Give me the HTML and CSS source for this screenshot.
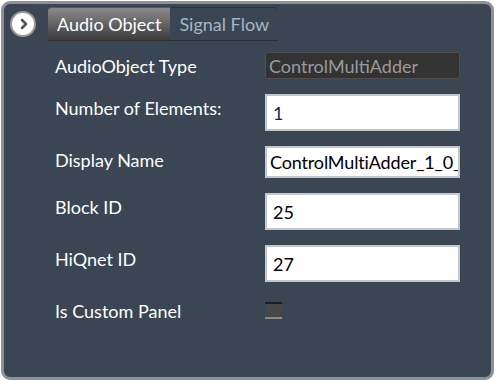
FILE: index.html
```html
<!DOCTYPE html>
<html>
<head>
<meta charset="utf-8">
<link rel="stylesheet" href="styles.css">
</head>
<body>
<div class="frame">
  <div class="header">
    <div class="circle-btn">
      <svg width="12" height="12" viewBox="0 0 12 12"><path d="M4 2 L8 6 L4 10" fill="none" stroke="#555" stroke-width="2.6" stroke-linecap="round" stroke-linejoin="round"/></svg>
    </div>
    <div class="tabs">
      <div class="tab active">Audio Object</div>
      <div class="tab">Signal Flow</div>
    </div>
  </div>
  <div class="form">
    <div class="label">AudioObject Type</div>
    <div class="field disabled">ControlMultiAdder</div>

    <div class="label">Number of Elements:</div>
    <div class="field tall navy">1</div>

    <div class="label">Display Name</div>
    <div class="field mid">ControlMultiAdder_1_0_</div>

    <div class="label">Block ID</div>
    <div class="field tall">25</div>

    <div class="label">HiQnet ID</div>
    <div class="field tall">27</div>

    <div class="label">Is Custom Panel</div>
    <div class="check-cell"><div class="checkbox"></div></div>
  </div>
</div>
</body>
</html>
```
FILE: styles.css
```css
html, body {
  margin: 0;
  padding: 0;
  background: #ffffff;
}
body {
  width: 496px;
  height: 381px;
  font-family: Lato, "Open Sans", sans-serif;
}
.frame {
  margin: 1px 0 0 1px;
  width: 487px;
  height: 373px;
  border: 3px solid #8e9195;
  border-radius: 9px;
  background: #3a4653;
}
.header {
  display: flex;
  align-items: center;
  padding: 3px 0 0 6px;
  gap: 12px;
}
.circle-btn {
  width: 22px;
  height: 22px;
  border-radius: 50%;
  background: #ffffff;
  border: 2px solid #9a9a9a;
  display: flex;
  align-items: center;
  justify-content: center;
}
.circle-btn svg {
  margin-left: 1px;
}
.tabs {
  display: flex;
}
.tab {
  height: 32px;
  line-height: 32px;
  font-size: 18px;
  padding: 0 9px;
  color: #a7b5c3;
  border-top: 1px solid #2a3037;
  border-bottom: 1px solid #2a3037;
  border-top-right-radius: 4px;
}
.tab.active {
  color: #ffffff;
  background: linear-gradient(#8a8a8a, #3c3c3c);
  border-top: 1px solid #5a5a5a;
  border-bottom: 1px solid #333333;
  border-radius: 4px 0 0 0;
}
.form {
  display: grid;
  grid-template-columns: 210px 195px;
  row-gap: 15px;
  padding: 11px 0 0 51px;
}
.label {
  color: #ffffff;
  font-size: 18px;
  line-height: 24px;
  padding-top: 2px;
  white-space: nowrap;
}
.field {
  box-sizing: border-box;
  background: #ffffff;
  border: 2px solid #c3c7cc;
  color: #000000;
  font-size: 18px;
  padding: 0 0 0 6px;
  white-space: nowrap;
  overflow: hidden;
  display: flex;
  align-items: center;
}
.field.disabled {
  height: 27px;
  background: #333333;
  border: 1px solid #505050;
  border-radius: 2px;
  color: #9a9a9a;
  padding-left: 3px;
}
.field.tall {
  height: 37px;
}
.field.mid {
  height: 32px;
  padding-left: 3px;
  letter-spacing: -0.15px;
}
.field.navy {
  color: #0d2a55;
}
.check-cell {
  padding-top: 5px;
}
.checkbox {
  box-sizing: border-box;
  width: 17px;
  height: 17px;
  background: #474747;
  border-top: 2px solid #1f1f1f;
  border-bottom: 2px solid #8a8a8a;
}
```
